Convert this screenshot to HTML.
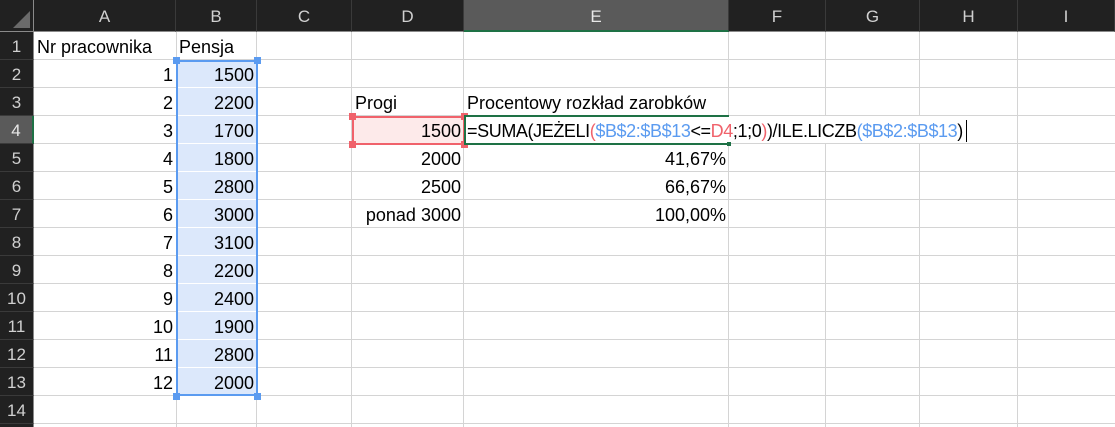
<!DOCTYPE html><html><head><meta charset="utf-8"><style>
html,body{margin:0;width:1115px;height:427px;overflow:hidden;background:#fff;position:relative;font-family:"Liberation Sans",sans-serif;}
.a{position:absolute;box-sizing:border-box}
.ch{top:0;height:32px;background:#212121;color:#d0d0d0;font-size:17px;text-align:center;line-height:34px;border-right:1px solid #3a3a3a;border-bottom:1px solid #8a8a8a}
.rh{left:0;width:34px;height:28px;background:#212121;color:#d0d0d0;font-size:17px;text-align:center;line-height:30px;border-bottom:1px solid #3a3a3a;border-right:1px solid #8a8a8a}
.vl{top:32px;width:1px;height:395px;background:#d4d4d4}
.hl{left:34px;width:1081px;height:1px;background:#d4d4d4}
.t{font-size:18px;color:#000;height:28px;line-height:31px;white-space:nowrap}
.r{text-align:right;padding-right:3px}
.l{padding-left:3px}
.h{width:7px;height:7px}
</style></head><body>
<div class="a" style="left:0;top:0;width:34px;height:32px;background:#212121;border-right:1px solid #8a8a8a;border-bottom:1px solid #8a8a8a"><svg width="34" height="32"><polygon points="30,11 30,28 13,28" fill="#6a6a6a"/></svg></div>
<div class="a ch" style="left:34px;width:142px">A</div>
<div class="a ch" style="left:176px;width:81px">B</div>
<div class="a ch" style="left:257px;width:95px">C</div>
<div class="a ch" style="left:352px;width:112px">D</div>
<div class="a ch" style="left:464px;width:265px;background:#5a5a5a;color:#e8e8e8;border-bottom:2px solid #1e7145">E</div>
<div class="a ch" style="left:729px;width:97px">F</div>
<div class="a ch" style="left:826px;width:94px">G</div>
<div class="a ch" style="left:920px;width:98px">H</div>
<div class="a ch" style="left:1018px;width:97px">I</div>
<div class="a rh" style="top:32px">1</div><div class="a rh" style="top:60px">2</div><div class="a rh" style="top:88px">3</div>
<div class="a rh" style="top:116px;background:#5a5a5a;color:#e8e8e8;border-right:2px solid #1e7145">4</div>
<div class="a rh" style="top:144px">5</div><div class="a rh" style="top:172px">6</div><div class="a rh" style="top:200px">7</div><div class="a rh" style="top:228px">8</div><div class="a rh" style="top:256px">9</div><div class="a rh" style="top:284px">10</div><div class="a rh" style="top:312px">11</div><div class="a rh" style="top:340px">12</div><div class="a rh" style="top:368px">13</div><div class="a rh" style="top:396px">14</div><div class="a" style="left:0;top:424px;width:34px;height:3px;background:#212121;border-right:1px solid #8a8a8a"></div>
<div class="a vl" style="left:176px"></div><div class="a vl" style="left:256px"></div><div class="a vl" style="left:351px"></div><div class="a vl" style="left:463px"></div><div class="a vl" style="left:728px"></div><div class="a vl" style="left:825px"></div><div class="a vl" style="left:919px"></div><div class="a vl" style="left:1017px"></div>
<div class="a hl" style="top:59px"></div><div class="a hl" style="top:87px"></div><div class="a hl" style="top:115px"></div><div class="a hl" style="top:143px"></div><div class="a hl" style="top:171px"></div><div class="a hl" style="top:199px"></div><div class="a hl" style="top:227px"></div><div class="a hl" style="top:255px"></div><div class="a hl" style="top:283px"></div><div class="a hl" style="top:311px"></div><div class="a hl" style="top:339px"></div><div class="a hl" style="top:367px"></div><div class="a hl" style="top:395px"></div><div class="a hl" style="top:423px"></div>
<div class="a" style="left:176px;top:60px;width:82px;height:336px;background:#dce8fb;border:2px solid #5b9bf0"></div>
<div class="a hl" style="left:178px;width:78px;background:#fff;top:87px"></div><div class="a hl" style="left:178px;width:78px;background:#fff;top:115px"></div><div class="a hl" style="left:178px;width:78px;background:#fff;top:143px"></div><div class="a hl" style="left:178px;width:78px;background:#fff;top:171px"></div><div class="a hl" style="left:178px;width:78px;background:#fff;top:199px"></div><div class="a hl" style="left:178px;width:78px;background:#fff;top:227px"></div><div class="a hl" style="left:178px;width:78px;background:#fff;top:255px"></div><div class="a hl" style="left:178px;width:78px;background:#fff;top:283px"></div><div class="a hl" style="left:178px;width:78px;background:#fff;top:311px"></div><div class="a hl" style="left:178px;width:78px;background:#fff;top:339px"></div><div class="a hl" style="left:178px;width:78px;background:#fff;top:367px"></div>
<div class="a h" style="left:173px;top:57px;background:#5b9bf0"></div><div class="a h" style="left:254px;top:57px;background:#5b9bf0"></div><div class="a h" style="left:173px;top:393px;background:#5b9bf0"></div><div class="a h" style="left:254px;top:393px;background:#5b9bf0"></div>
<div class="a" style="left:352px;top:116px;width:113px;height:29px;background:#fdeaea;border:2px solid #f0626b"></div>
<div class="a h" style="left:349px;top:113px;background:#f0626b"></div><div class="a h" style="left:461px;top:113px;background:#f0626b"></div><div class="a h" style="left:349px;top:141px;background:#f0626b"></div><div class="a h" style="left:461px;top:141px;background:#f0626b"></div>
<div class="a" style="left:465px;top:116px;width:500px;height:27px;background:#fff"></div>
<div class="a" style="left:464px;top:115px;width:265px;height:2px;background:#1e7145"></div>
<div class="a" style="left:464px;top:143px;width:265px;height:2px;background:#1e7145"></div>
<div class="a" style="left:464px;top:115px;width:2px;height:30px;background:#1e7145"></div>
<div class="a" style="left:727px;top:142px;width:4px;height:4px;background:#1e7145"></div>
<div class="a t l" style="left:34px;top:32px">Nr pracownika</div>
<div class="a t l" style="left:176px;top:32px">Pensja</div>
<div class="a t r" style="left:34px;top:60px;width:142px">1</div><div class="a t r" style="left:34px;top:88px;width:142px">2</div><div class="a t r" style="left:34px;top:116px;width:142px">3</div><div class="a t r" style="left:34px;top:144px;width:142px">4</div><div class="a t r" style="left:34px;top:172px;width:142px">5</div><div class="a t r" style="left:34px;top:200px;width:142px">6</div><div class="a t r" style="left:34px;top:228px;width:142px">7</div><div class="a t r" style="left:34px;top:256px;width:142px">8</div><div class="a t r" style="left:34px;top:284px;width:142px">9</div><div class="a t r" style="left:34px;top:312px;width:142px">10</div><div class="a t r" style="left:34px;top:340px;width:142px">11</div><div class="a t r" style="left:34px;top:368px;width:142px">12</div>
<div class="a t r" style="left:176px;top:60px;width:81px">1500</div><div class="a t r" style="left:176px;top:88px;width:81px">2200</div><div class="a t r" style="left:176px;top:116px;width:81px">1700</div><div class="a t r" style="left:176px;top:144px;width:81px">1800</div><div class="a t r" style="left:176px;top:172px;width:81px">2800</div><div class="a t r" style="left:176px;top:200px;width:81px">3000</div><div class="a t r" style="left:176px;top:228px;width:81px">3100</div><div class="a t r" style="left:176px;top:256px;width:81px">2200</div><div class="a t r" style="left:176px;top:284px;width:81px">2400</div><div class="a t r" style="left:176px;top:312px;width:81px">1900</div><div class="a t r" style="left:176px;top:340px;width:81px">2800</div><div class="a t r" style="left:176px;top:368px;width:81px">2000</div>
<div class="a t l" style="left:352px;top:88px">Progi</div>
<div class="a t l" style="left:464px;top:88px">Procentowy rozkład zarobków</div>
<div class="a t r" style="left:352px;top:116px;width:112px">1500</div><div class="a t r" style="left:352px;top:144px;width:112px">2000</div><div class="a t r" style="left:352px;top:172px;width:112px">2500</div><div class="a t r" style="left:352px;top:200px;width:112px">ponad 3000</div>
<div class="a t l" style="left:464px;top:116px;letter-spacing:-0.4px">=SUMA(JEŻELI<span style="color:#f0626b">(</span><span style="color:#5b9bf0">$B$2:$B$13</span>&lt;=<span style="color:#f0626b">D4</span>;1;0<span style="color:#f0626b">)</span>)/ILE.LICZB<span style="color:#5b9bf0">(</span><span style="color:#5b9bf0">$B$2:$B$13</span>)<span style="display:inline-block;width:1px;height:22px;background:#000;vertical-align:-5px;margin-left:3px"></span></div>
<div class="a t r" style="left:464px;top:144px;width:265px">41,67%</div><div class="a t r" style="left:464px;top:172px;width:265px">66,67%</div><div class="a t r" style="left:464px;top:200px;width:265px">100,00%</div>
</body></html>
